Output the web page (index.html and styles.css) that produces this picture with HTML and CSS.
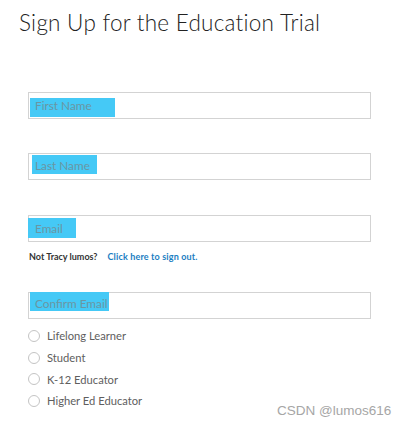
FILE: index.html
```html
<!DOCTYPE html>
<html>
<head>
<meta charset="utf-8">
<link rel="stylesheet" href="styles.css">
</head>
<body>
<div class="page">
  <h1 class="title">Sign Up for the Education Trial</h1>
  <form class="form">
    <div class="field f1"><span class="ph">First Name</span></div>
    <div class="field f2"><span class="ph">Last Name</span></div>
    <div class="field f3"><span class="ph">Email</span></div>
    <p class="note"><span class="who">Not Tracy lumos?</span><a class="link" href="#">Click here to sign out.</a></p>
    <div class="field f4"><span class="ph">Confirm Email</span></div>
    <ul class="radios">
      <li class="radio"><span class="dot"></span>Lifelong Learner</li>
      <li class="radio"><span class="dot"></span>Student</li>
      <li class="radio"><span class="dot"></span>K-12 Educator</li>
      <li class="radio"><span class="dot"></span>Higher Ed Educator</li>
    </ul>
  </form>
  <div class="watermark">CSDN @lumos616</div>
</div>
</body>
</html>
```
FILE: styles.css
```css
html, body {
  margin: 0;
  padding: 0;
  background: #fff;
}
.page {
  position: relative;
  width: 404px;
  height: 426px;
  overflow: hidden;
  font-family: Lato, "Open Sans", sans-serif;
}
.title {
  margin: 0;
  padding: 9px 0 0 19px;
  font-weight: 300;
  font-size: 22.5px;
  line-height: 28px;
  color: #222;
  letter-spacing: 0.25px;
}
.form {
  margin: 0;
  padding: 0 0 0 28px;
}
.field {
  box-sizing: border-box;
  width: 343px;
  height: 27px;
  border: 1px solid #d3d3d3;
  display: flex;
  align-items: flex-start;
}
.f1 { margin-top: 55px; }
.f2 { margin-top: 34px; }
.f3 { margin-top: 35px; }
.f4 { margin-top: 28px; }
.ph {
  background: #45c9f6;
  color: #6a96a3;
  font-size: 11.8px;
  line-height: 19px;
  padding-left: 5px;
  box-sizing: border-box;
}
.f1 .ph { margin: 5px 0 0 1px; width: 85px; height: 19px; line-height: 16px; padding-left: 5px; }
.f2 .ph { margin: 1px 0 0 3px; width: 65px; height: 19px; line-height: 22px; padding-left: 3px; }
.f3 .ph { margin: 2px 0 0 -1px; width: 48px; height: 20px; line-height: 22px; padding-left: 7px; }
.f4 .ph { margin: -1px 0 0 1px; width: 79px; height: 19px; line-height: 24px; padding-left: 5px; }
.note {
  margin: 8px 0 0 1px;
  font-size: 9px;
  font-weight: 700;
  line-height: 14px;
  display: flex;
  gap: 10px;
}
.who { color: #333; }
.link { color: #1b7ec2; text-decoration: none; letter-spacing: 0.15px; }
.radios {
  list-style: none;
  margin: 8px 0 0 0;
  padding: 0;
  display: flex;
  flex-direction: column;
  gap: 4px;
}
.radio {
  display: flex;
  align-items: center;
  gap: 7px;
  height: 17.7px;
  font-size: 11.2px;
  color: #5e5e5e;
}
.dot {
  width: 10px;
  height: 10px;
  border: 1px solid #c4c4c4;
  border-radius: 50%;
  flex: none;
}
.watermark {
  position: absolute;
  left: 277px;
  top: 403px;
  font-family: "Liberation Sans", Arial, sans-serif;
  font-size: 13.5px;
  color: #a6a6a6;
}
```
